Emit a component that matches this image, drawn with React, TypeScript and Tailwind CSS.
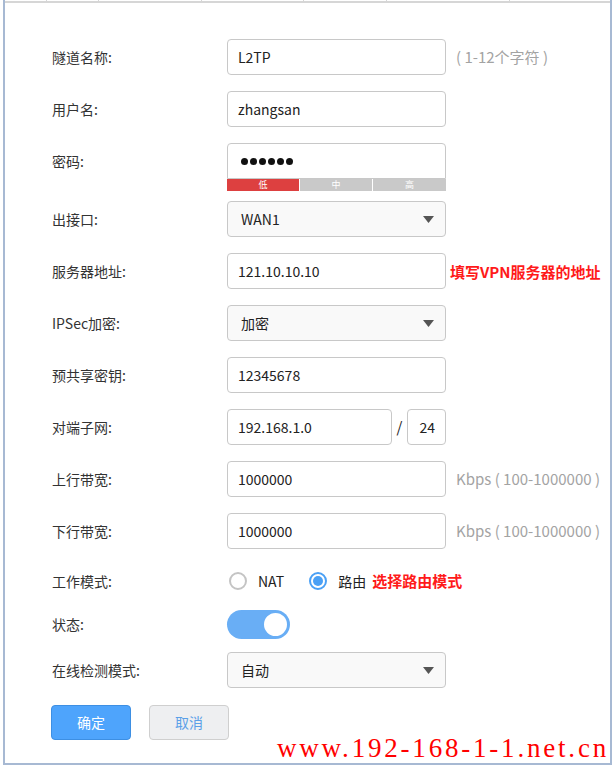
import React from 'react';

const font = { fontFamily: '"Noto Sans CJK SC", "Open Sans", sans-serif' };

const Row: React.FC<{ label: string; className?: string; children: React.ReactNode }> = ({ label, className = '', children }) => (
  <div className={`flex items-center ${className}`}>
    <div className="w-[222px] pl-[47px] text-[14px] text-[#333]">{label}</div>
    {children}
  </div>
);

const TextBox: React.FC<{ value: React.ReactNode; className?: string }> = ({ value, className = 'w-[219px]' }) => (
  <div className={`h-[36px] rounded-[4px] border border-[#c8c8c8] bg-white flex items-center px-[10px] text-[14px] text-[#222] ${className}`}>
    {value}
  </div>
);

const SelectBox: React.FC<{ value: string }> = ({ value }) => (
  <div className="h-[36px] w-[219px] rounded-[4px] border border-[#c8c8c8] bg-[#f9f9f9] flex items-center justify-between pl-[13px] pr-[11px] text-[14px] text-[#222]">
    <span>{value}</span>
    <svg width="11" height="7" viewBox="0 0 11 7">
      <path d="M0 0 H11 L5.5 7 Z" fill="#555" />
    </svg>
  </div>
);

const Hint: React.FC<{ children: React.ReactNode }> = ({ children }) => (
  <span className="ml-[10px] text-[15px] text-[#a3a3a3]">{children}</span>
);

const Note: React.FC<{ children: React.ReactNode }> = ({ children }) => (
  <span className="text-[15px] font-bold text-[#ff1a1a]">{children}</span>
);

export default function App() {
  return (
    <div className="w-[615px] h-[767px] bg-white overflow-hidden" style={font}>
      <div className="relative ml-[3px] w-[609px] h-[765px] border-l-2 border-r-2 border-b-2 border-[#a7b9d3]">
        {/* cut-off header row */}
        <div className="flex h-[3px] border-b-2 border-[#d6d6d6]">
          <div className="w-[42px] border-r border-[#d6d6d6]" />
          <div className="w-[52px] border-r border-[#d6d6d6]" />
          <div className="w-[103px] border-r border-[#d6d6d6]" />
          <div className="w-[102px] border-r border-[#d6d6d6]" />
          <div className="w-[83px] border-r border-[#d6d6d6]" />
          <div className="w-[123px] border-r border-[#d6d6d6]" />
        </div>

        <div className="flex flex-col pt-[36px]">
          <Row label="隧道名称:">
            <TextBox value="L2TP" />
            <Hint>( 1-12个字符 )</Hint>
          </Row>

          <Row label="用户名:" className="mt-[16px]">
            <TextBox value="zhangsan" />
          </Row>

          <div className="flex mt-[16px]">
            <div className="w-[222px] pl-[47px] h-[36px] flex items-center text-[14px] text-[#333]">密码:</div>
            <div className="flex flex-col w-[219px]">
              <TextBox
                className="w-[219px] rounded-b-none pl-[13px]"
                value={
                  <span className="flex gap-[2px]">
                    {[0, 1, 2, 3, 4, 5].map((i) => (
                      <span key={i} className="w-[7px] h-[7px] rounded-full bg-[#111]" />
                    ))}
                  </span>
                }
              />
              <div className="flex h-[12px] text-[9px] leading-[12px] text-white text-center">
                <div className="w-[72px] bg-[#dd4040]">低</div>
                <div className="w-[72px] ml-px bg-[#c9c9c9]">中</div>
                <div className="w-[73px] ml-px bg-[#c9c9c9]">高</div>
              </div>
            </div>
          </div>

          <Row label="出接口:" className="mt-[10px]">
            <SelectBox value="WAN1" />
          </Row>

          <Row label="服务器地址:" className="mt-[16px]">
            <TextBox value="121.10.10.10" />
            <span className="ml-[4px]"><Note>填写VPN服务器的地址</Note></span>
          </Row>

          <Row label="IPSec加密:" className="mt-[16px]">
            <SelectBox value="加密" />
          </Row>

          <Row label="预共享密钥:" className="mt-[16px]">
            <TextBox value="12345678" />
          </Row>

          <Row label="对端子网:" className="mt-[16px]">
            <TextBox value="192.168.1.0" className="w-[165px]" />
            <span className="w-[15px] text-center text-[15px] text-[#222]">/</span>
            <TextBox value="24" className="w-[39px] justify-end" />
          </Row>

          <Row label="上行带宽:" className="mt-[16px]">
            <TextBox value="1000000" />
            <Hint>Kbps ( 100-1000000 )</Hint>
          </Row>

          <Row label="下行带宽:" className="mt-[16px]">
            <TextBox value="1000000" />
            <Hint>Kbps ( 100-1000000 )</Hint>
          </Row>

          <Row label="工作模式:" className="mt-[14px] h-[36px]">
            <div className="flex items-center text-[14px] text-[#222]">
              <span className="ml-[2px] w-[18px] h-[18px] rounded-full border-2 border-[#c4c4c4] bg-white" />
              <span className="ml-[11px]">NAT</span>
              <span className="ml-[25px] w-[18px] h-[18px] rounded-full border-2 border-[#4aa0f5] bg-white flex items-center justify-center">
                <span className="w-[10px] h-[10px] rounded-full bg-[#4aa0f5]" />
              </span>
              <span className="ml-[11px]">路由</span>
              <span className="ml-[6px]"><Note>选择路由模式</Note></span>
            </div>
          </Row>

          <Row label="状态:" className="mt-[10px] h-[30px]">
            <div className="w-[63px] h-[29px] rounded-full bg-[#69aef5] flex items-center justify-end pr-[1px]">
              <span className="w-[27px] h-[27px] rounded-full bg-white border-2 border-[#69aef5]" />
            </div>
          </Row>

          <Row label="在线检测模式:" className="mt-[13px]">
            <SelectBox value="自动" />
          </Row>

          <div className="flex mt-[17px] pl-[46px] gap-[18px]">
            <div className="w-[80px] h-[35px] rounded-[4px] border border-[#3d8fe3] bg-[#4ea4fc] flex items-center justify-center text-[14px] text-white">
              确定
            </div>
            <div className="w-[80px] h-[35px] rounded-[4px] border border-[#cfcfcf] bg-[#eeeff1] flex items-center justify-center text-[14px] text-[#5ba0e8]">
              取消
            </div>
          </div>
        </div>

        <div
          className="absolute right-[1px] bottom-[1px] text-[27px] leading-none text-[#ff0000] tracking-[2.8px]"
          style={{ fontFamily: '"Liberation Serif", "DejaVu Serif", serif' }}
        >
          www.192-168-1-1.net.cn
        </div>
      </div>
    </div>
  );
}
